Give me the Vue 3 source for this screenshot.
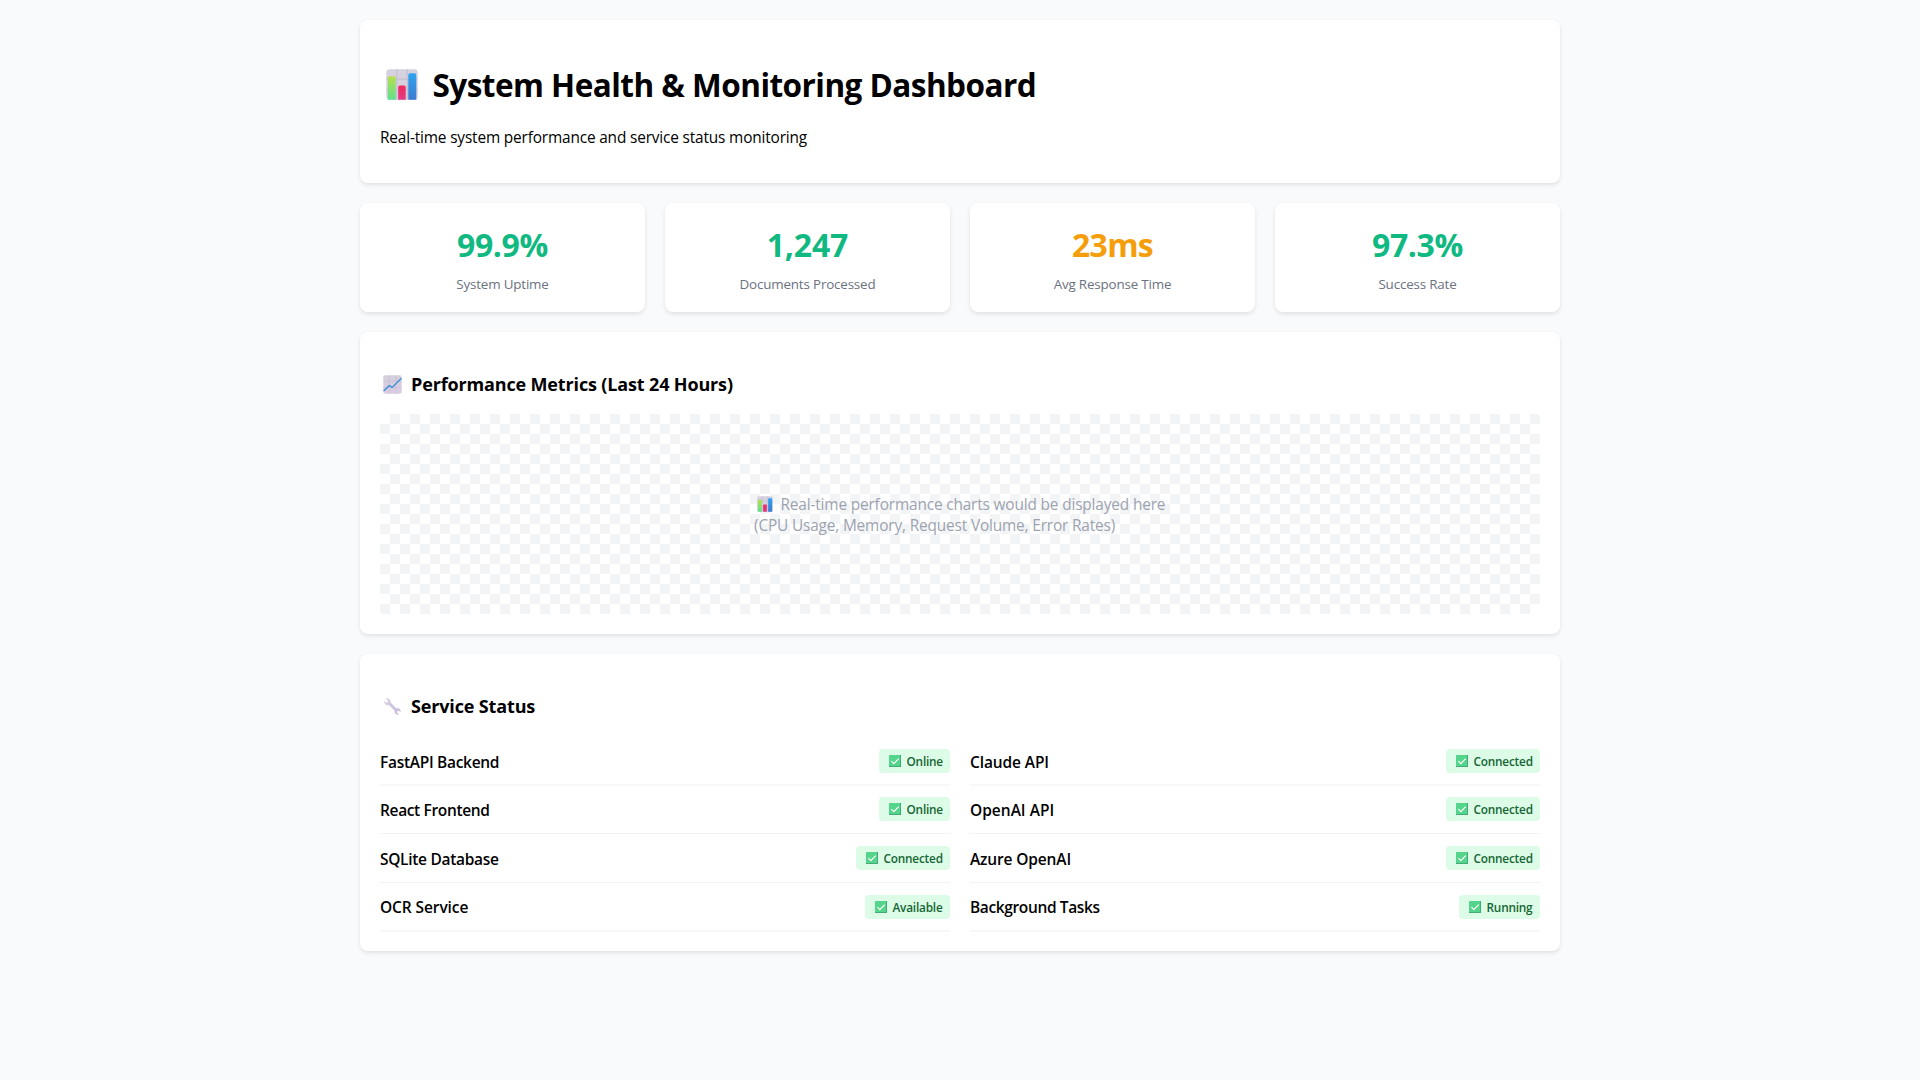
<script setup>
const stats = [
  { value: '99.9%', label: 'System Uptime', tone: 'good', tracking: '-0.4px' },
  { value: '1,247', label: 'Documents Processed', tone: 'good', tracking: '-0.15px' },
  { value: '23ms', label: 'Avg Response Time', tone: 'warn', tracking: '-0.75px' },
  { value: '97.3%', label: 'Success Rate', tone: 'good', tracking: '-0.4px' },
]
const columns = [
  [
    { name: 'FastAPI Backend', state: 'Online', tracking: '-0.3px' },
    { name: 'React Frontend', state: 'Online', tracking: '-0.35px' },
    { name: 'SQLite Database', state: 'Connected', tracking: '-0.3px' },
    { name: 'OCR Service', state: 'Available', tracking: '-0.1px' },
  ],
  [
    { name: 'Claude API', state: 'Connected', tracking: '-0.12px' },
    { name: 'OpenAI API', state: 'Connected', tracking: '0px' },
    { name: 'Azure OpenAI', state: 'Connected', tracking: '-0.15px' },
    { name: 'Background Tasks', state: 'Running', tracking: '-0.37px' },
  ],
]
const badgeWidth = { Online: '71px', Connected: '94px', Available: '85px', Running: '81px' }
</script>

<template>
  <svg class="defs" width="0" height="0" aria-hidden="true">
    <defs>
      <linearGradient id="g-green" x1="0" y1="0" x2="0" y2="1"><stop offset="0" stop-color="#b5e04d" /><stop offset="1" stop-color="#5fe08e" /></linearGradient>
      <linearGradient id="g-pink" x1="0" y1="0" x2="0" y2="1"><stop offset="0" stop-color="#f02a60" /><stop offset="1" stop-color="#e23a84" /></linearGradient>
      <linearGradient id="g-blue" x1="0" y1="0" x2="0" y2="1"><stop offset="0" stop-color="#2ea4f0" /><stop offset="1" stop-color="#3c7bd0" /></linearGradient>
      <linearGradient id="g-paper" x1="0" y1="0" x2="0" y2="1"><stop offset="0" stop-color="#d3d0dc" /><stop offset="1" stop-color="#dccbe6" /></linearGradient>
      <symbol id="bars" viewBox="0 0 32 32" preserveAspectRatio="none">
        <rect x="0.3" y="0.3" width="31.4" height="31.4" rx="3.2" fill="#d6d1df" />
        <path d="M10.8 .5v31M21.2 .5v31M.5 10.5h31M.5 21.5h31" stroke="#c2bccd" stroke-width="1" fill="none" />
        <path d="M1.8 9.3Q1.8 7.6 3.5 7.6H8Q9.7 7.6 9.7 9.3V31.7H1.8Z" fill="url(#g-green)" />
        <path d="M12.2 18.7Q12.2 17 13.9 17H18Q19.7 17 19.7 18.7V31.7H12.2Z" fill="url(#g-pink)" />
        <path d="M22.3 6.2Q22.3 4.5 24 4.5H28.6Q30.3 4.5 30.3 6.2V31.7H22.3Z" fill="url(#g-blue)" />
      </symbol>
    </defs>
  </svg>
  <main class="page">
    <section class="card header">
      <h1><svg class="ico big"><use href="#bars" /></svg><span>System Health &amp; Monitoring Dashboard</span></h1>
      <p>Real-time system performance and service status monitoring</p>
    </section>

    <section class="stats">
      <div v-for="s in stats" :key="s.label" class="card stat">
        <div class="value" :class="s.tone" :style="{ letterSpacing: s.tracking }">{{ s.value }}</div>
        <div class="label">{{ s.label }}</div>
      </div>
    </section>

    <section class="card metrics">
      <h3>
        <svg class="ico mid" viewBox="0 0 32 32">
          <rect x="0.5" y="0.5" width="31" height="31" rx="3.2" fill="url(#g-paper)" />
          <path d="M10.5 .5v31M21.5 .5v31M.5 10.5h31M.5 21.5h31" stroke="#c6bdd2" stroke-width="1.2" fill="none" />
          <path d="M1 27L10.5 18L15.5 21L31 5.5" fill="none" stroke="#3b93d6" stroke-width="2.4" />
        </svg><span>Performance Metrics (Last 24 Hours)</span>
      </h3>
      <div class="chart">
        <div class="hint">
          <div class="line"><svg class="ico small"><use href="#bars" /></svg><span>Real-time performance charts would be displayed here</span></div>
          <div class="line">(CPU Usage, Memory, Request Volume, Error Rates)</div>
        </div>
      </div>
    </section>

    <section class="card services">
      <h3>
        <svg class="ico mid" viewBox="0 0 32 32">
          <path d="M10 10L24 24" stroke="#cfc4e0" stroke-width="5" fill="none" />
          <path d="M4.5 2.5L8.5 6.5L7.5 9L5 9.5L2 6.5Q1.5 12.5 6 13.8Q9.5 14.5 12 11.5Q14 7.5 11.5 4.5Q9 1.5 4.5 2.5Z" fill="#d6cfe2" />
          <path d="M27 29.5L23.5 26L24.2 23.5L26.8 23L30 26Q30.3 20.5 26.5 19Q22.5 18 20.3 21Q18.2 25 20.8 28Q23.5 30.5 27 29.5Z" fill="#cbbfdd" />
        </svg><span>Service Status</span>
      </h3>
      <div class="grid">
        <div v-for="(col, i) in columns" :key="i" class="col">
          <div v-for="r in col" :key="r.name" class="row">
            <span class="name" :style="{ letterSpacing: r.tracking }">{{ r.name }}</span>
            <span class="badge" :style="{ width: badgeWidth[r.state] }">
              <svg class="check" viewBox="0 0 12 12">
                <rect width="12" height="12" rx="0.8" fill="#55d48b" />
                <path d="M0 11.5h12M11.5 0v12" stroke="#43ab75" stroke-width="1" fill="none" />
                <path d="M2.4 6.2L4.8 8.6L9.7 3.6" fill="none" stroke="#fff" stroke-width="1.2" />
              </svg><span>{{ r.state }}</span>
            </span>
          </div>
        </div>
      </div>
    </section>
  </main>
</template>

<style>
body { background: #f9fafc; }
</style>
<style scoped>
.defs { position: absolute; }
.page {
  width: 1200px; margin: 0 auto; padding: 20px 0;
  display: flex; flex-direction: column; gap: 20px;
  font-family: "Open Sans", "Noto Sans", sans-serif; color: #000; font-size: 15.4px;
}
.card { background: #fff; border-radius: 8px; box-shadow: 0 2px 4px rgba(0, 0, 0, 0.1); padding: 20px; box-sizing: border-box; }
h1, h3, p { margin: 0; white-space: nowrap; }
.ico { flex: none; display: block; }
.header { height: 162.7px; }
h1 { margin-top: 22.6px; height: 43px; line-height: 43px; font-size: 31.5px; display: flex; align-items: center; letter-spacing: -0.53px; }
.big { width: 32px; height: 31px; margin: 0 15px 0 5.5px; }
p { margin-top: 21.4px; line-height: 21.3px; letter-spacing: -0.16px; }
.stats { display: grid; grid-template-columns: repeat(4, 1fr); gap: 20px; }
.stat { height: 109.3px; text-align: center; }
.value { font-size: 32px; font-weight: 700; line-height: 44px; }
.good { color: #10b981; }
.warn { color: #f59e0b; }
.label { margin-top: 8px; font-size: 13.4px; line-height: 18.6px; color: #6b7280; letter-spacing: -0.17px; }
.metrics { height: 302px; }
h3 { margin-top: 20px; height: 25px; line-height: 25px; font-size: 18px; display: flex; align-items: center; letter-spacing: -0.15px; }
.mid { width: 19px; height: 19px; margin: 0 9px 0 3px; }
.chart {
  margin-top: 17px; height: 200px; border-radius: 4px; display: flex; align-items: center; justify-content: center;
  background: repeating-conic-gradient(#f3f4f6 0 25%, #fff 0 50%) 0 0 / 20px 20px;
}
.hint { color: #9ca3af; width: 412px; padding-top: 2px; white-space: nowrap; }
.line { height: 21.3px; line-height: 21.3px; display: flex; align-items: center; letter-spacing: -0.155px; }
.small { width: 16px; height: 16px; margin: 0 7.5px 0 3px; }
.services { height: 297.4px; }
.grid { margin-top: 17px; display: grid; grid-template-columns: 1fr 1fr; gap: 20px; }
.row { height: 49px; padding-top: 12px; box-sizing: border-box; border-bottom: 1px solid #f1f2f3; display: flex; align-items: flex-start; justify-content: space-between; }
.row:nth-child(1) { height: 50px; padding-top: 13px; border-bottom: 2px solid #f8f8f9; }
.row:nth-child(2) { height: 48px; padding-top: 11px; }
.row:nth-child(4) { border-bottom: 2px solid #f8f8f9; }
.name { font-weight: 600; font-size: 15.5px; line-height: 26px; }
.row:nth-child(4) .name { line-height: 25px; }
.badge {
  height: 24px; box-sizing: border-box; padding: 0 0 0 10px; border-radius: 4px; background: #dcfce7; color: #166534;
  display: flex; align-items: center; gap: 5.5px; font-size: 11.8px; font-weight: 600; letter-spacing: -0.2px; white-space: nowrap;
}
.check { width: 12px; height: 12px; flex: none; }
</style>
